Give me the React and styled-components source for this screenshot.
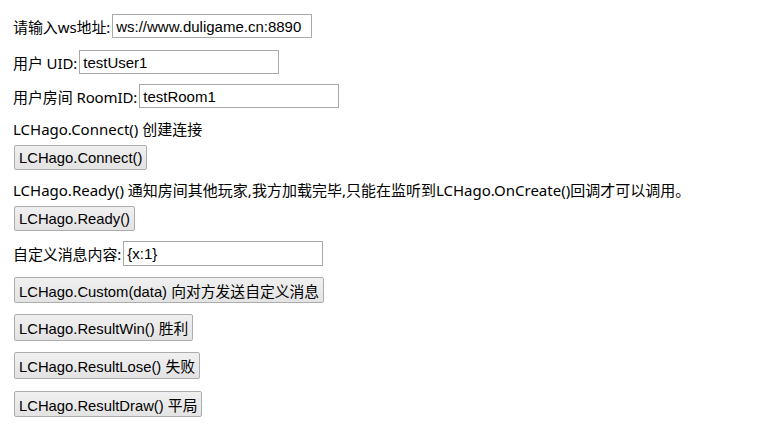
import React, { useState } from 'react';
import styled, { createGlobalStyle } from 'styled-components';

const GlobalStyle = createGlobalStyle`
  body {
    margin: 0;
    background: #fff;
    color: #000;
    font-family: "Noto Sans", "Noto Sans CJK SC", sans-serif;
    font-size: 15px;
  }
`

const Page = styled.div`
  display: flex;
  flex-direction: column;
  align-items: flex-start;
  padding: 14px 13px 0;
`

const Row = styled.div`
  display: flex;
  align-items: center;
  height: ${props => props.h}px;
  margin-top: ${props => props.mt || 0}px;
  white-space: nowrap;
`

const Label = styled.span`
  margin-right: 2px;
  letter-spacing: -0.1px;
`

const TextInput = styled.input`
  box-sizing: border-box;
  width: 200px;
  height: 100%;
  padding: 0 3px;
  border: 1px solid #a9a9a9;
  font-family: "Liberation Sans", Arial, sans-serif;
  font-size: 15px;
  color: #000;
  outline: none;
`

const Button = styled.button`
  box-sizing: border-box;
  height: ${props => props.h || 25}px;
  margin: ${props => props.mt || 0}px 0 0 1px;
  padding: 0 4px;
  border: 1px solid #adadad;
  border-radius: 2px;
  background: linear-gradient(#f0f0f0, #e3e3e3);
  font-family: "Liberation Sans", Arial, "Noto Sans CJK SC", sans-serif;
  font-size: 14.8px;
  color: #000;
  white-space: nowrap;
  cursor: pointer;
`

const App = () => {
  const [ws, setWs] = useState("ws://www.duligame.cn:8890")
  const [uid, setUid] = useState("testUser1")
  const [room, setRoom] = useState("testRoom1")
  const [msg, setMsg] = useState("{x:1}")
  return (<Page>
    <GlobalStyle />
    <Row h={24}>
      <Label>请输入ws地址:</Label>
      <TextInput type="text" value={ws} onChange={e => setWs(e.target.value)} />
    </Row>
    <Row h={24} mt={12}>
      <Label>用户 UID:</Label>
      <TextInput type="text" value={uid} onChange={e => setUid(e.target.value)} />
    </Row>
    <Row h={24} mt={10}>
      <Label>用户房间 RoomID:</Label>
      <TextInput type="text" value={room} onChange={e => setRoom(e.target.value)} />
    </Row>
    <Row h={20} mt={10}>LCHago.Connect() 创建连接</Row>
    <Button mt={7}>LCHago.Connect()</Button>
    <Row h={20} mt={9}>LCHago.Ready() 通知房间其他玩家,我方加载完毕,只能在监听到LCHago.OnCreate()回调才可以调用。</Row>
    <Button mt={7}>LCHago.Ready()</Button>
    <Row h={25} mt={10}>
      <Label>自定义消息内容:</Label>
      <TextInput type="text" value={msg} onChange={e => setMsg(e.target.value)} />
    </Row>
    <Button mt={11} h={26}>LCHago.Custom(data) 向对方发送自定义消息</Button>
    <Button mt={11} h={27}>LCHago.ResultWin() 胜利</Button>
    <Button mt={11} h={27}>LCHago.ResultLose() 失败</Button>
    <Button mt={12} h={26}>LCHago.ResultDraw() 平局</Button>
  </Page>);
}

export default App;
